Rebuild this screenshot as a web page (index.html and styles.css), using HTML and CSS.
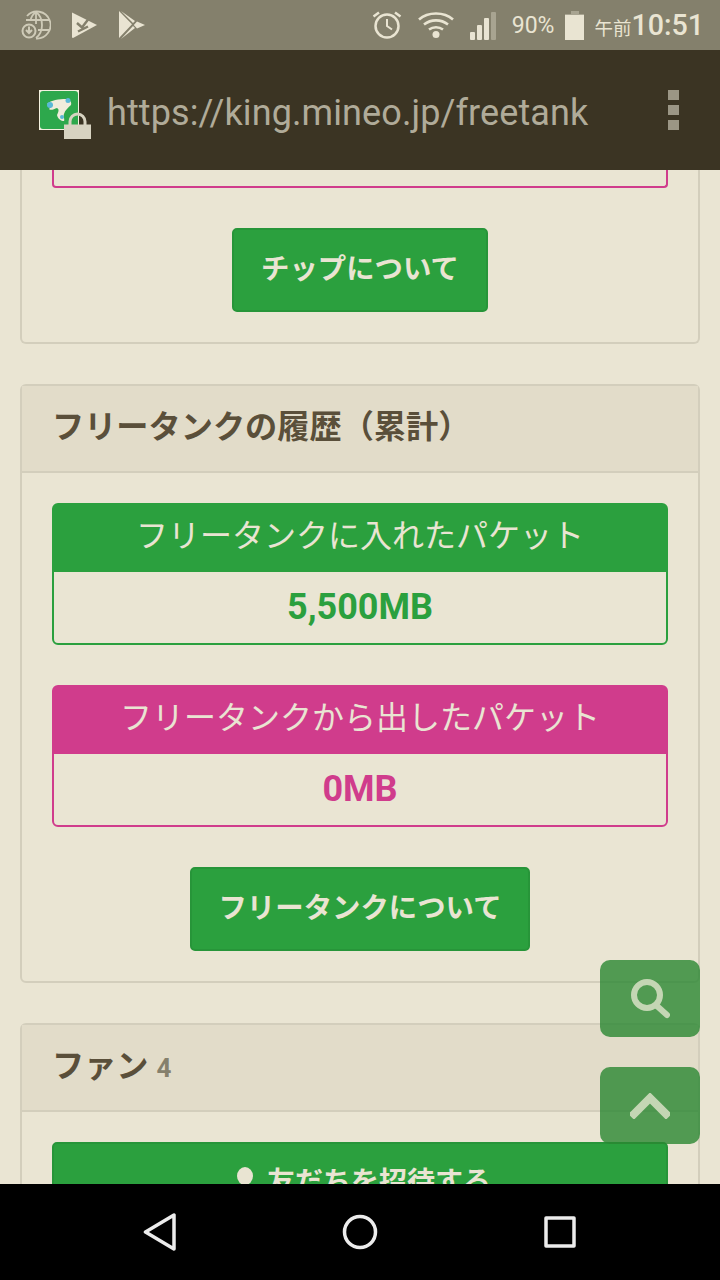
FILE: index.html
```html
<!DOCTYPE html>
<html lang="ja">
<head>
    <meta charset="UTF-8">
    <title>フリータンク</title>
    <link rel="stylesheet" href="styles.css">
</head>
<body>
    <div class="phone">
        <div class="status-bar">
            <div class="status-left">
                <svg class="st-icon" width="30" height="30" viewBox="0 0 30 30" fill="none" stroke="#cfcbb8" stroke-width="1.800">
                    <path d="M6 6a13.500 13.500 0 1 1 9 22.500"/>
                    <path d="M15 2c-3 2-5 5-5.500 9M15 2c4 3 6 8 6 13s-2 10-6 13"/>
                    <path d="M15 2v12M5 10h24M17 20h12"/>
                    <circle cx="8" cy="21" r="6.500" stroke-width="2"/>
                    <path d="M8 16.500v6M5 20l3 3 3-3" stroke-width="2"/>
                </svg>
                <svg class="st-icon" width="26" height="28" viewBox="0 0 26 28">
                    <path fill="#e9e4d2" d="M0 1.500L25 14 1 27l-1-.5z"/>
                    <path fill="none" stroke="#84806c" stroke-width="2.500" d="M5 12l5 4.500L18 6M6 20.500l10-5"/>
                </svg>
                <svg class="st-icon" width="26" height="28" viewBox="0 0 26 28">
                    <path fill="#e9e4d2" d="M0 0l13 13.200L0 27zM2 0l14 10-2 2zM2 28l14-11-2-2zM18 10.500l8 3.500-8 3.500-3.200-3.500z"/>
                </svg>
            </div>
            <div class="status-right">
                <svg class="st-icon" width="30" height="30" viewBox="0 0 30 30" fill="none" stroke="#e9e4d2" stroke-width="2.500">
                    <circle cx="15" cy="16" r="11.500"/>
                    <path d="M15 9v7l5 3.500" stroke-width="2"/>
                    <path d="M1.500 6.500L7 2.500M28.500 6.500L23 2.500"/>
                </svg>
                <svg class="st-icon" width="36" height="28" viewBox="0 0 36 28" fill="none" stroke="#e9e4d2" stroke-width="2.600">
                    <path d="M1 8.500C10 .5 26 .5 35 8.500"/>
                    <path d="M6 13.500c7-5.500 17-5.500 24 0"/>
                    <path d="M11 18.500c4-3 10-3 14 0"/>
                    <circle cx="18" cy="23.500" r="3.500" fill="#e9e4d2" stroke="none"/>
                </svg>
                <svg class="st-icon signal" width="26" height="28" viewBox="0 0 26 28">
                    <rect x="0" y="20" width="5" height="8" rx="1" fill="#e9e4d2"/>
                    <rect x="7" y="13" width="5" height="15" rx="1" fill="#e9e4d2"/>
                    <rect x="14" y="6" width="5" height="22" rx="1" fill="#e9e4d2"/>
                    <rect x="21" y="0" width="5" height="28" rx="1" fill="#a8a491"/>
                </svg>
                <span class="battery-text">90%</span>
                <svg class="st-icon battery" width="20" height="29" viewBox="0 0 20 29">
                    <path fill="#a8a491" d="M6 0h8v3h5v3H0V3h6z"/>
                    <rect x="0" y="4" width="19" height="25" fill="#e9e4d2"/>
                </svg>
                <span class="clock"><span class="ampm">午前</span>10:51</span>
            </div>
        </div>

        <div class="url-bar">
            <div class="favicon-wrap">
                <svg class="favicon" width="40" height="40" viewBox="0 0 40 40">
                    <rect width="40" height="40" fill="#f4f1e0"/>
                    <rect x="1" y="1" width="38" height="38" rx="3" fill="#2da84c"/>
                    <path fill="#f0ecdc" d="M8 14c4-4 12-5 19-5 4 1 6 3 5 6-3 3-6 5-7 9-1 2 1 6 0 7-3 0-6-2-7-6 2-4 2-6 0-7-3 1-6 3-8 1l4-4z"/>
                    <circle cx="11" cy="15" r="3" fill="#5ab8d8"/>
                    <circle cx="29" cy="10.500" r="2.500" fill="#5ab8d8"/>
                    <circle cx="23" cy="27" r="2" fill="#5ab8d8"/>
                </svg>
                <svg class="lock" width="27" height="27" viewBox="0 0 27 27">
                    <path fill="none" stroke="#d7d3c1" stroke-width="3" d="M6 14V9.500a7.500 7.500 0 0 1 15 0V14"/>
                    <rect x="0" y="12.500" width="27" height="14.500" fill="#d7d3c1"/>
                </svg>
            </div>
            <span class="url-text">https://king.mineo.jp/freetank</span>
            <div class="menu-dots"><i></i><i></i><i></i></div>
        </div>

        <div class="content">
            <div class="card first-card">
                <div class="card-body">
                    <div class="cut-box"></div>
                    <a class="btn chip-btn"><span>チップについて</span></a>
                </div>
            </div>

            <div class="card">
                <div class="card-head"><span>フリータンクの履歴（累計）</span></div>
                <div class="card-body">
                    <div class="stat stat-green">
                        <div class="stat-title">フリータンクに入れたパケット</div>
                        <div class="stat-value">5,500MB</div>
                    </div>
                    <div class="stat stat-pink">
                        <div class="stat-title">フリータンクから出したパケット</div>
                        <div class="stat-value">0MB</div>
                    </div>
                    <a class="btn tank-btn"><span>フリータンクについて</span></a>
                </div>
            </div>

            <div class="card">
                <div class="card-head"><span>ファン <span class="count">4</span></span></div>
                <div class="card-body">
                    <a class="btn invite-btn">
                        <svg width="16" height="26" viewBox="0 0 16 26"><ellipse cx="8" cy="9" rx="8" ry="9" fill="#e9e4d2"/></svg>
                        <span>友だちを招待する</span>
                    </a>
                </div>
            </div>

            <a class="float-btn float-search">
                <svg width="40" height="40" viewBox="0 0 40 40" fill="none" stroke="#c4d6b4" stroke-linecap="round">
                    <circle cx="17" cy="16" r="13" stroke-width="6"/>
                    <path d="M27 27l10 9" stroke-width="6"/>
                </svg>
            </a>
            <a class="float-btn float-top">
                <svg width="40" height="26" viewBox="0 0 40 26" fill="none" stroke="#c4d6b4" stroke-width="8" stroke-linecap="square">
                    <path d="M4 21L20 5l16 16"/>
                </svg>
            </a>
        </div>

        <div class="nav-bar">
            <svg width="34" height="38" viewBox="0 0 34 38" fill="none" stroke="#ececec" stroke-width="3.500" stroke-linejoin="round"><path d="M3.500 19L32 2v34z"/></svg>
            <svg width="36" height="36" viewBox="0 0 36 36" fill="none" stroke="#ececec" stroke-width="3.500"><circle cx="18" cy="18" r="15.500"/></svg>
            <svg width="32" height="32" viewBox="0 0 32 32" fill="none" stroke="#ececec" stroke-width="3.500" stroke-linejoin="round"><rect x="2" y="2" width="28" height="28"/></svg>
        </div>
    </div>
</body>
</html>
```

FILE: styles.css
```css
html, body {
    margin: 0;
    padding: 0;
}
body {
    font-family: Roboto, "Noto Sans CJK JP", sans-serif;
    background-color: #eae5d3;
}
.phone {
    width: 720px;
    height: 1280px;
    display: flex;
    flex-direction: column;
    overflow: hidden;
}
.status-bar {
    height: 50px;
    flex: none;
    background-color: #84806c;
    display: flex;
    justify-content: space-between;
    align-items: center;
    color: #e9e4d2;
}
.status-left {
    display: flex;
    align-items: center;
    gap: 21px;
    padding-left: 21px;
}
.status-right {
    display: flex;
    align-items: center;
    padding-right: 16px;
}
.st-icon {
    display: block;
}
.status-right .st-icon {
    margin-right: 16px;
}
.status-right .signal {
    margin-top: 2px;
}
.status-right .battery {
    margin-right: 9px;
}
.battery-text {
    font-size: 23px;
    margin-right: 11px;
}
.clock {
    font-size: 28.600px;
    font-weight: 500;
}
.ampm {
    font-size: 18.500px;
    font-weight: 400;
}
.url-bar {
    height: 120px;
    flex: none;
    background-color: #3b3423;
    display: flex;
    align-items: center;
    position: relative;
}
.favicon-wrap {
    position: relative;
    width: 40px;
    height: 40px;
    margin-left: 39px;
    margin-right: 28px;
}
.favicon {
    display: block;
}
.lock {
    position: absolute;
    left: 25px;
    top: 22px;
}
.url-text {
    font-size: 36px;
    color: #b0ab99;
    letter-spacing: 0.100px;
    padding-top: 6px;
}
.menu-dots {
    position: absolute;
    right: 41px;
    top: 40px;
    display: flex;
    flex-direction: column;
    gap: 5px;
}
.menu-dots i {
    display: block;
    width: 11px;
    height: 10px;
    background-color: #9b9685;
}
.content {
    flex: 1;
    position: relative;
    overflow: hidden;
    padding: 0 20px;
}
.card {
    border: 2px solid #d3cebc;
    border-radius: 6px;
    margin-bottom: 40px;
}
.first-card {
    border-top: none;
    border-radius: 0 0 6px 6px;
}
.card-head {
    height: 87px;
    box-sizing: border-box;
    padding: 0 0 10px 30px;
    background-color: #e2dcc9;
    border-bottom: 2px solid #d3cebc;
    display: flex;
    align-items: center;
    font-size: 32.200px;
    font-weight: 700;
    color: #5a4f3a;
}
.count {
    font-size: 26px;
    color: #85806c;
}
.card-body {
    padding: 30px 30px 30px;
    display: flex;
    flex-direction: column;
    align-items: center;
}
.first-card .card-body {
    padding-top: 0;
}
.cut-box {
    align-self: stretch;
    height: 16px;
    border: 2px solid #d03c8c;
    border-top: none;
    border-radius: 0 0 4px 4px;
    margin-bottom: 40px;
}
.btn {
    display: flex;
    align-items: center;
    justify-content: center;
    height: 84px;
    box-sizing: border-box;
    padding-bottom: 8px;
    background-color: #2ba03e;
    border: 2px solid #279539;
    border-radius: 5px;
    color: #e9e4d2;
    font-size: 28.400px;
    font-weight: 700;
}
.chip-btn {
    width: 256px;
}
.tank-btn {
    width: 340px;
}
.invite-btn {
    align-self: stretch;
    gap: 14px;
    padding-left: 8px;
    font-size: 28px;
}
.stat {
    align-self: stretch;
    border: 2px solid;
    border-radius: 6px;
    margin-bottom: 40px;
    text-align: center;
}
.stat-green {
    border-color: #2ba03e;
}
.stat-pink {
    border-color: #d03c8c;
}
.stat-title {
    height: 67px;
    font-size: 32px;
    line-height: 62px;
    color: #e9e4d2;
}
.stat-green .stat-title {
    background-color: #2ba03e;
}
.stat-pink .stat-title {
    background-color: #d03c8c;
}
.stat-value {
    height: 71px;
    line-height: 71px;
    font-size: 36px;
    font-weight: 700;
}
.stat-green .stat-value {
    color: #2ba03e;
}
.stat-pink .stat-value {
    color: #d03c8c;
}
.float-btn {
    position: absolute;
    right: 20px;
    width: 100px;
    height: 77px;
    border-radius: 10px;
    background-color: rgba(43, 135, 50, 0.8);
    display: flex;
    align-items: center;
    justify-content: center;
}
.float-search {
    top: 790px;
}
.float-top {
    top: 897px;
}
.nav-bar {
    height: 96px;
    flex: none;
    background-color: #000;
    display: flex;
    align-items: center;
    justify-content: center;
    gap: 166px;
    padding-right: 2px;
    position: relative;
}
```
